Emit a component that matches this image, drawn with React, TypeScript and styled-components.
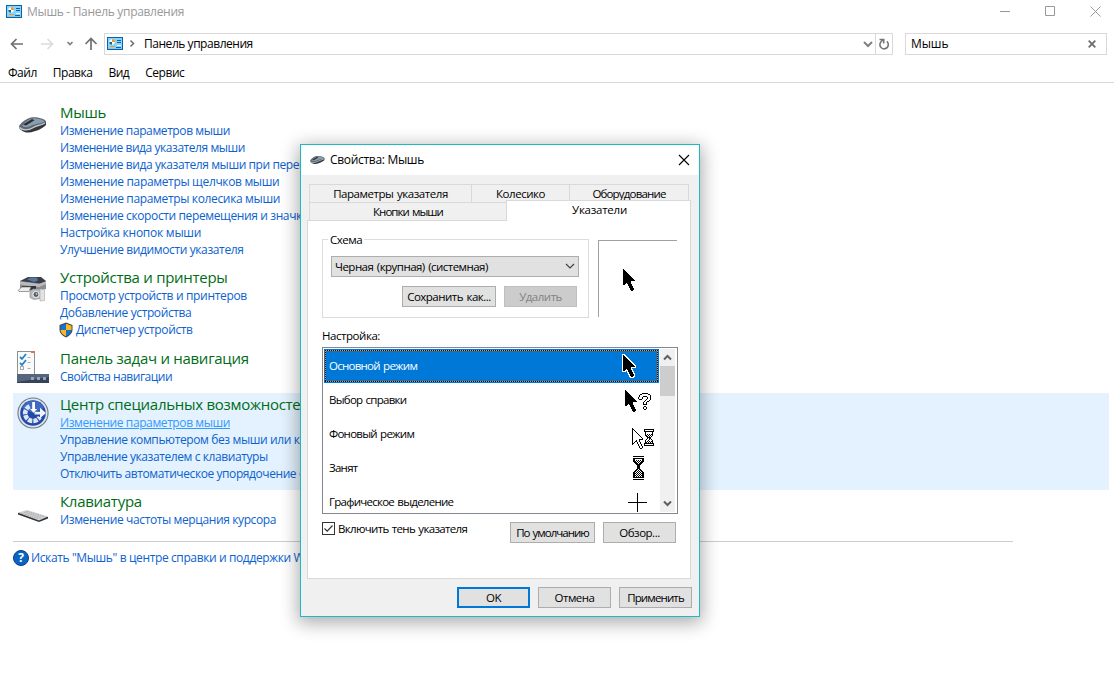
import React from "react";
import styled, { createGlobalStyle, css } from "styled-components";

const GlobalStyle = createGlobalStyle`
  * { box-sizing: border-box; }
  html, body { margin: 0; padding: 0; background: #fff; }
  body { overflow: hidden; font-family: "Open Sans", "Noto Sans", sans-serif; font-size: 12px; color: #000; }
  button { font-family: inherit; }
  svg { display: block; flex: none; }
`;

const Screen = styled.div`
  position: relative;
  width: 1114px;
  height: 680px;
  overflow: hidden;
  background: #fff;
  white-space: nowrap;
`;

/* ---------- explorer window ---------- */

const TitleBar = styled.header`
  display: flex;
  align-items: center;
  height: 23px;
  padding-left: 6px;
  gap: 5px;
  color: #999;
`;

const WindowTitle = styled.span`
  flex: 1;
  letter-spacing: -0.31px;
`;

const WindowControls = styled.div`
  display: flex;
  gap: 34px;
  padding-right: 13px;
`;

const NavBar = styled.nav`
  display: flex;
  align-items: center;
  height: 40px;
  padding: 1px 7px 0 10px;
`;

const NavArrows = styled.div`
  display: flex;
  align-items: center;
  width: 94px;
`;

const Field = styled.div<{ $width: number }>`
  display: flex;
  align-items: center;
  width: ${(p) => p.$width}px;
  height: 22px;
  border: 1px solid #d9d9d9;
`;

const AddressField = styled(Field)`
  padding-left: 2px;
  margin-right: 12px;
`;

const Crumb = styled.span`
  flex: 1;
  padding-left: 7px;
  letter-spacing: -0.46px;
`;

const RefreshButton = styled.div`
  display: flex;
  align-items: center;
  justify-content: center;
  width: 17px;
  height: 20px;
  margin-left: 2px;
  border-left: 1px solid #d9d9d9;
`;

const SearchField = styled(Field)`
  justify-content: space-between;
  padding: 0 10px 0 5px;
  letter-spacing: -0.1px;
`;

const MenuBar = styled.div`
  display: flex;
  gap: 16px;
  height: 20px;
  padding-left: 8px;
  line-height: 20px;
  letter-spacing: -0.48px;
  border-bottom: 1px solid #d9d9d9;
`;

const Results = styled.main`
  padding: 18px 5px 0 13px;
`;

const Group = styled.section<{ $active?: boolean }>`
  display: flex;
  padding: 1px 0 7px;
  background: ${(p) => (p.$active ? "#e3f2fe" : "transparent")};
`;

const GroupIcon = styled.div<{ $top: number }>`
  width: 47px;
  padding: ${(p) => p.$top}px 0 0 4px;
`;

const GroupTitle = styled.h2`
  margin: 0;
  font-size: 15px;
  font-weight: 400;
  line-height: 21px;
  letter-spacing: -0.28px;
  color: #006d16;
`;

const TaskLink = styled.a<{ $hot?: boolean; $shield?: boolean }>`
  display: flex;
  align-items: flex-start;
  height: ${(p) => (p.$shield ? 18 : 17)}px;
  line-height: 15px;
  margin-left: ${(p) => (p.$shield ? -2 : 0)}px;
  gap: 2px;
  color: ${(p) => (p.$hot ? "#3399ff" : "#0b62cf")};
  ${(p) => p.$hot && css`text-decoration: underline;`}
`;

const LinkText = styled.span<{ $track?: number }>`
  letter-spacing: ${(p) => p.$track ?? -0.38}px;
`;

const HelpRow = styled.div`
  display: flex;
  align-items: center;
  gap: 2px;
  width: 1000px;
  margin-top: 5px;
  padding-top: 8px;
  line-height: 16px;
  border-top: 1px solid #ccc;
  color: #0b62cf;
`;

/* ---------- dialog ---------- */

const Dialog = styled.div`
  position: absolute;
  left: 300px;
  top: 144px;
  width: 400px;
  height: 473px;
  background: #f0f0f0;
  border: 1px solid #1cb8c4;
  box-shadow: 0 4px 17px 2px rgba(0, 0, 0, 0.33);
`;

const DialogTitle = styled.div`
  display: flex;
  align-items: center;
  height: 30px;
  padding: 0 9px 0 8px;
  gap: 5px;
  line-height: 16px;
  background: #fff;
`;

const DialogBody = styled.div`
  display: flex;
  flex-direction: column;
  padding: 9px 7px 0 6px;
  font-size: 11.5px;
`;

const TabRow = styled.div`
  display: flex;
  height: 18px;
  padding-left: 2px;
`;

const Tab = styled.div<{ $width: number; $last?: boolean; $active?: boolean; $track?: number }>`
  width: ${(p) => p.$width}px;
  height: 18px;
  line-height: 18px;
  text-align: center;
  letter-spacing: ${(p) => p.$track ?? -0.45}px;
  word-spacing: 1px;
  border: solid #d9d9d9;
  border-width: 1px ${(p) => (p.$last ? 1 : 0)}px 0 1px;
  ${(p) =>
    p.$active &&
    css`
      position: relative;
      z-index: 1;
      height: 21px;
      margin-top: -2px;
      padding-left: 2px;
      background: #fff;
    `}
`;

const TabPanel = styled.div`
  width: 384px;
  height: 359px;
  padding: 18px 12px 0 14px;
  background: #fff;
  border: 1px solid #d9d9d9;
`;

const SchemeRow = styled.div`
  display: flex;
  gap: 9px;
  height: 80px;
  align-items: flex-start;
`;

const SchemeBox = styled.fieldset`
  display: flex;
  flex-direction: column;
  width: 267px;
  height: 79px;
  margin: 0;
  padding: 16px 9px 0 8px;
  border: 1px solid #dcdcdc;
`;

const SchemeLegend = styled.div`
  align-self: flex-start;
  height: 16px;
  margin-top: -24px;
  margin-bottom: 8px;
  margin-left: -3px;
  padding: 0 2px;
  line-height: 15px;
  letter-spacing: -0.5px;
  background: #fff;
`;

const Select = styled.div`
  display: flex;
  align-items: center;
  justify-content: space-between;
  height: 21px;
  padding: 0 3px;
  letter-spacing: -0.53px;
  word-spacing: 1px;
  background: #e1e1e1;
  border: 1px solid #adadad;
`;

const ButtonRow = styled.div<{ $top?: number; $right?: number }>`
  display: flex;
  justify-content: flex-end;
  gap: 8px;
  margin-top: ${(p) => p.$top ?? 0}px;
  margin-right: ${(p) => p.$right ?? 0}px;
`;

const Button = styled.button<{ $width: number; $primary?: boolean; $track?: number }>`
  width: ${(p) => p.$width}px;
  height: 21px;
  padding: 0;
  font-size: 11.5px;
  line-height: 17px;
  letter-spacing: ${(p) => p.$track ?? -0.5}px;
  word-spacing: 1px;
  color: #000;
  background: #e1e1e1;
  border: ${(p) => (p.$primary ? "2px solid #0078d7" : "1px solid #adadad")};
  &:disabled {
    color: #838383;
    background: #ccc;
    border-color: #bfbfbf;
  }
`;

const Preview = styled.div`
  width: 79px;
  height: 77px;
  margin-top: 1px;
  padding: 28px 0 0 24px;
  border: solid #a0a0a0;
  border-width: 1px 0 0 1px;
`;

const Caption = styled.div`
  height: 28px;
  padding-top: 8px;
  line-height: 17px;
  letter-spacing: -0.45px;
`;

const ListBox = styled.div`
  display: flex;
  width: 356px;
  height: 167px;
  padding: 1px;
  border: 1px solid #828790;
`;

const List = styled.div`
  width: 335px;
  height: 163px;
  overflow: hidden;
`;

const ListItem = styled.div<{ $selected?: boolean }>`
  position: relative;
  display: flex;
  align-items: center;
  justify-content: space-between;
  height: 34px;
  padding: 0 2px 0 4px;
  border: 1px solid transparent;
  letter-spacing: -0.74px;
  word-spacing: 1px;
  ${(p) =>
    p.$selected &&
    css`
      color: #fff;
      background: #0078d7;
      border-color: #0078d7;
    `}
`;

const FocusRect = styled.svg`
  position: absolute;
  inset: 0;
`;

const ItemLabel = styled.span`
  padding-bottom: 1px;
`;

const ScrollBar = styled.div`
  display: flex;
  flex-direction: column;
  justify-content: space-between;
  width: 15px;
  height: 163px;
  margin-left: 1px;
  background: #f0f0f0;
`;

const ScrollArrow = styled.div`
  display: flex;
  align-items: center;
  justify-content: center;
  height: 17px;
`;

const ScrollThumb = styled.div`
  height: 30px;
  margin-bottom: auto;
  background: #cdcdcd;
`;

const OptionsRow = styled.div`
  display: flex;
  justify-content: space-between;
  padding: 8px 2px 0 0;
`;

const CheckLabel = styled.div`
  display: flex;
  gap: 3px;
  line-height: 13px;
  letter-spacing: -0.68px;
  word-spacing: 1px;
`;

const CheckBox = styled.span`
  width: 13px;
  height: 13px;
  border: 1px solid #333;
`;

/* ---------- drawings ---------- */

const toPath = (rows: string[], dx = 0, dy = 0) =>
  rows
    .map((row, y) =>
      [...row].map((c, x) => (c === "X" ? `M${x + dx} ${y + dy}h1v1h-1z` : "")).join("")
    )
    .join("");

const ARROW = [
  "X", "XX", "XXX", "XXXX", "XXXXX", "XXXXXX", "XXXXXXX", "XXXXXXXX", "XXXXXXXXX",
  "XXXXXXXXXX", "XXXXXXXXXXX", "XXXXXXXXXXXX", "XXXXXXXX", "XXXXXXXX", "XXX.XXXX",
  "XX...XXXX", ".....XXXX", "......XXXX", "......XXXX", ".......XXXX", ".......XXXX", "........XX",
];

const HOLLOW_ARROW = [
  "X", "XX", "X.X", "X..X", "X...X", "X....X", "X.....X", "X......X", "X.......X",
  "X........X", "X.........X", "X......XXXX", "X...X..X", "X..XX..X", "X.X..X..X", "XX...X..X",
  "X.....X..X", "......X..X", ".......X..X", ".......X..X", "........XX",
];

const QUESTION = [
  "....XXXXXX", "..XX......XX", ".X..........X", ".X...XXXX...X", "X...X....X..X", "X...X....X..X",
  ".XXX....X...X", ".......X...X", "......X..XX", ".....X..X", ".....X..X", ".....XXXX", "",
  "......XX", ".....X..X", ".....X..X", "......XX",
];

const SMALL_GLASS = [
  "XXXXXXXXXX", "X........X", "XXXXXXXXXX", ".X......X.", ".X......X.", ".X.X.X.XX.", ".XX.X.X.X.",
  "..XX.X.X..", "...XXXX...", "...X.XX...", "..X..X.X..", ".X..X...X.", ".X.X.X.XX.", ".XX.X.X.X.",
  "XXXXXXXXXX", "X........X", "XXXXXXXXXX",
];

const BIG_GLASS = [
  "XXXXXXXXXXX", "", "XXXXXXXXXXX", "XX.......XX", "XX.X.X.X.XX", "XXX.X.X.XXX", ".XXX.X.XXX.",
  "..XXX.XXX..", "...XXXXX...", "....XXX....", "....XXX....", "....XXX....", "....XXX....", "...XX.XX...",
  "..XX.X.XX..", ".XX.X.X.XX.", "XX.X.X.X.XX", "XXX.X.X.XXX", "XX.X.X.X.XX", "XXX.X.X.XXX", "XX.X.X.X.XX",
  "XXXXXXXXXXX", "", "XXXXXXXXXXX",
];

const CROSS = [...Array(9).fill(".........X"), "XXXXXXXXXXXXXXXXXXX", ...Array(9).fill(".........X")];

const Sprite = ({ parts, size = 34 }: { parts: { d: string; outline?: boolean }[]; size?: number }) => (
  <svg width={size} height={size} viewBox={`0 0 ${size} ${size}`} shapeRendering="crispEdges">
    {parts.map((p, i) => (
      <g key={i}>
        {p.outline && <path d={p.d} fill="#fff" stroke="#fff" strokeWidth="2" />}
        <path d={p.d} fill="#000" />
      </g>
    ))}
  </svg>
);

const MouseIcon = ({ width, height }: { width: number; height: number }) => (
  <svg width={width} height={height} viewBox="0 0 30 18">
    <path d="M3 12c1 3 5 5 9 4.500 6-.5 14-4 17-7.500V5.500L4 10z" fill="#33363b" />
    <path d="M2 10.500C3 7.500 9 2.500 14 1.500c5-.8 14 1 15 4 0 3-7 3.500-11 5.500S10 15 6.500 14.500 2 13 2 10.500z" fill="#5f6973" />
    <path d="M2.500 11.500c2.500 2.800 8.500 3.300 13 .5 4-2.400 9-2.700 12.500-5" fill="none" stroke="#c3c9d0" strokeWidth="1.300" />
    <path d="M5 9.500C9 5 12 2.800 16 2.500c5-.3 10 1.200 11.500 3C25 7.500 18 7.500 14 9.800 11 11.500 7 11.500 5 9.500z" fill="#8a9cb2" />
    <path d="M6 8.500 15 3l2.500 1.200L9 9.500z" fill="#2b2f35" />
  </svg>
);

const PanelIcon = () => (
  <svg width="16" height="13" viewBox="0 0 16 13">
    <rect x=".5" y=".5" width="15" height="12" fill="#7cc9f5" stroke="#0b62a4" />
    <path d="M1 1h14v10H1z" fill="#86d3fb" />
    <circle cx="5" cy="5" r="2.700" fill="#fff" />
    <path d="M5 2a3 3 0 0 1 3 3H5z" fill="#f59a1b" />
    <path d="M2.300 5A2.700 2.700 0 0 0 5 7.700V5z" fill="#0b62a4" />
    <path d="M10 3.500h4M10 5.500h4" stroke="#0b62a4" />
    <path d="M10 8.500h4" stroke="#fff" />
    <path d="M3 9.500h5" stroke="#f59a1b" />
    <path d="M9 10.500h5" stroke="#0b62a4" />
  </svg>
);

const PrinterIcon = () => (
  <svg width="30" height="26" viewBox="0 0 30 26">
    <path d="M3 5v7l14 3 12-2V5z" fill="#8b8e92" />
    <path d="M3 5 11 1l13 0 5 4-6 2.500z" fill="#3a3d43" />
    <path d="m10 3.500 3-2h7l1 3-4 1.500z" fill="#5578a0" />
    <path d="M3 5.500 22 8l7-2.500V8l-7 3L3 8.500z" fill="#b9bbbe" />
    <path d="M5 10h14v4H5z" fill="#303337" />
    <path d="m1 14.500 4-3.500h9l-2 4.500H2z" fill="#eceded" stroke="#777" strokeWidth=".7" />
    <path d="m13 15 3-2h10v9l-9 1.500-4-2z" fill="#b6b9bc" stroke="#808387" strokeWidth=".6" />
    <path d="m23 13 4.500.5v11L23 25z" fill="#e1e3e4" stroke="#999" strokeWidth=".5" />
    <circle cx="19" cy="18.500" r="3.600" fill="#e3e5e7" />
    <circle cx="19" cy="18.500" r="2.400" fill="#53585d" />
    <circle cx="19.500" cy="18" r=".9" fill="#c7ccd1" />
  </svg>
);

const TaskbarIcon = () => (
  <svg width="32" height="32" viewBox="0 0 32 32">
    <rect x=".5" y=".5" width="17" height="24" fill="#fafafa" stroke="#8d9094" />
    <path d="M14 0h3v2h-3z" fill="#e0703e" />
    <path d="m3 6 2 2 4-5M3 12l2 2 4-5" fill="none" stroke="#2382c4" strokeWidth="1.800" />
    <path d="M10.500 6.500h3M10.500 11.500h3M10.500 17.500h3" stroke="#b0b0b0" />
    <rect x="3.500" y="15.500" width="3" height="3" fill="none" stroke="#aaa" />
    <path d="M0 23h32v9H0z" fill="#34435a" />
    <path d="M0 23h32v3L0 31z" fill="#56657b" />
    <path d="M14 26h3v3h-3zM20 26h3v3h-3zM26 26h3v3h-3z" fill="#98a4b5" />
  </svg>
);

const AccessIcon = () => (
  <svg width="32" height="32" viewBox="0 0 32 32">
    <circle cx="16" cy="16" r="15.600" fill="#6f7885" />
    <circle cx="16" cy="16" r="14.500" fill="#dfe5ed" />
    <circle cx="16" cy="16" r="12.800" fill="#2149a8" />
    <path d="M5 11a12 12 0 0 1 22 0L16 16z" fill="#3f69c2" />
    <path
      d="M12.600 9.200A7.800 7.800 0 1 0 22.800 20"
      fill="none"
      stroke="#dfe6f3"
      strokeWidth="4.600"
      strokeDasharray="4.300 1"
    />
    <path d="M15.200 5h2.800v7h2.200l-3.600 3.800-3.600-3.800h2.200z" fill="#fff" />
    <path d="M17.500 14.800h5.500v-4l6 5.200-6 5.200v-3.600h-5.500z" fill="#f1f4fa" />
  </svg>
);

const KeyboardIcon = () => (
  <svg width="32" height="14" viewBox="0 0 32 14">
    <path d="m1 4 9-2 21 6v1.500L22 13 1 5.500z" fill="#2f3134" />
    <path d="m1 3.800 9-2.800L31 7.500l-9 4z" fill="#d0d1d2" />
    <path d="m4 4 17 5.800M7 3l17 5.800M9.500 2.200l18 5.500" stroke="#a2a4a6" strokeWidth=".9" strokeDasharray="1.500 .8" />
  </svg>
);

const ShieldIcon = () => (
  <svg width="16" height="16" viewBox="0 0 16 16">
    <path d="M8 .5 14.500 3v4.500c0 3.500-2.500 6-6.500 8-4-2-6.500-4.500-6.500-8V3z" fill="#404852" />
    <path d="M8 1.700V8H2.500V3.700z" fill="#1973c8" />
    <path d="M8 1.700V8h5.500V3.700z" fill="#fcb81f" />
    <path d="M8 8v6.300C4.500 12.500 2.700 10.500 2.500 8z" fill="#fcb81f" />
    <path d="M8 8v6.300c3.500-1.800 5.300-3.800 5.500-6.300z" fill="#1973c8" />
  </svg>
);

const HelpBadge = styled.span`
  display: flex;
  align-items: center;
  justify-content: center;
  width: 16px;
  height: 16px;
  border-radius: 50%;
  border: 1px solid #053e80;
  background: #0a64c4;
  color: #fff;
  font-size: 12px;
  font-weight: 700;
  line-height: 14px;
`;

/* ---------- content ---------- */

type Task = { text: string; track?: number; hot?: boolean; shield?: boolean };
type GroupData = { title: string; top: number; icon: React.ReactNode; active?: boolean; tasks: Task[] };

const groups: GroupData[] = [
  {
    title: "Мышь",
    top: 14,
    icon: <MouseIcon width={30} height={18} />,
    tasks: [
      { text: "Изменение параметров мыши", track: -0.4 },
      { text: "Изменение вида указателя мыши", track: -0.44 },
      { text: "Изменение вида указателя мыши при перемещении", track: -0.41 },
      { text: "Изменение параметры щелчков мыши", track: -0.34 },
      { text: "Изменение параметры колесика мыши", track: -0.35 },
      { text: "Изменение скорости перемещения и значков" },
      { text: "Настройка кнопок мыши", track: -0.25 },
      { text: "Улучшение видимости указателя" },
    ],
  },
  {
    title: "Устройства и принтеры",
    top: 9,
    icon: <PrinterIcon />,
    tasks: [
      { text: "Просмотр устройств и принтеров", track: -0.33 },
      { text: "Добавление устройства" },
      { text: "Диспетчер устройств", shield: true },
    ],
  },
  {
    title: "Панель задач и навигация",
    top: 3,
    icon: <TaskbarIcon />,
    tasks: [{ text: "Свойства навигации", track: -0.48 }],
  },
  {
    title: "Центр специальных возможностей",
    top: 3,
    icon: <AccessIcon />,
    active: true,
    tasks: [
      { text: "Изменение параметров мыши", track: -0.4, hot: true },
      { text: "Управление компьютером без мыши или клавиатуры" },
      { text: "Управление указателем с клавиатуры", track: -0.41 },
      { text: "Отключить автоматическое упорядочение окон", track: -0.42 },
    ],
  },
  {
    title: "Клавиатура",
    top: 18,
    icon: <KeyboardIcon />,
    tasks: [{ text: "Изменение частоты мерцания курсора" }],
  },
];

const cursors = [
  { label: "Основной режим", parts: [{ d: toPath(ARROW, 1, 6), outline: true }] },
  { label: "Выбор справки", parts: [{ d: toPath(ARROW, 3, 7) }, { d: toPath(QUESTION, 16, 10) }] },
  { label: "Фоновый режим", parts: [{ d: toPath(HOLLOW_ARROW, 10, 11) }, { d: toPath(SMALL_GLASS, 22, 12) }] },
  { label: "Занят", parts: [{ d: toPath(BIG_GLASS, 11, 5) }] },
  { label: "Графическое выделение", parts: [{ d: toPath(CROSS, 6, 8) }] },
];

const App = () => (
  <Screen>
    <GlobalStyle />
    <TitleBar>
      <PanelIcon />
      <WindowTitle>Мышь - Панель управления</WindowTitle>
      <WindowControls>
        <svg width="11" height="11" viewBox="0 0 11 11" stroke="#999"><path d="M0 5.500h10" /></svg>
        <svg width="11" height="11" viewBox="0 0 11 11" stroke="#999" fill="none"><path d="M.5.500h9v9h-9z" /></svg>
        <svg width="11" height="11" viewBox="0 0 11 11" stroke="#999"><path d="m.5.500 10 10m0-10-10 10" /></svg>
      </WindowControls>
    </TitleBar>
    <NavBar>
      <NavArrows>
        <svg width="90" height="14" viewBox="0 0 90 14" fill="none" strokeWidth="1.700">
          <path d="M13 7H1.500M6.500 2l-5 5 5 5" stroke="#707070" />
          <path d="M31 7h11.500M37.500 2l5 5-5 5" stroke="#dcdcdc" />
          <path d="m57.500 5 2.500 2.500L62.500 5" stroke="#808080" />
          <path d="M81 13V2M75.500 7 81 1.500 86.500 7" stroke="#707070" />
        </svg>
      </NavArrows>
      <AddressField $width={789}>
        <PanelIcon />
        <svg width="14" height="9" viewBox="0 0 14 9" fill="none" stroke="#707070" strokeWidth="1.500"><path d="m7.500 1.500 3 3-3 3" /></svg>
        <Crumb>Панель управления</Crumb>
        <svg width="10" height="8" viewBox="0 0 10 8" fill="none" stroke="#808080" strokeWidth="2"><path d="m1 2 4 4 4-4" /></svg>
        <RefreshButton>
          <svg width="12" height="12" viewBox="0 0 12 12" fill="none" stroke="#777" strokeWidth="1.600">
            <path d="M8.800 3.400A4.200 4.200 0 1 1 3 3.800L5 1.500M1.500 1.500h4.200v4" />
          </svg>
        </RefreshButton>
      </AddressField>
      <SearchField $width={202}>
        <span>Мышь</span>
        <svg width="8" height="8" viewBox="0 0 8 8" stroke="#707070" strokeWidth="1.900"><path d="m.7.700 6.600 6.600m0-6.600L.7 7.300" /></svg>
      </SearchField>
    </NavBar>
    <MenuBar>
      <span>Файл</span>
      <span>Правка</span>
      <span>Вид</span>
      <span>Сервис</span>
    </MenuBar>
    <Results>
      {groups.map((g) => (
        <Group key={g.title} $active={g.active}>
          <GroupIcon $top={g.top}>{g.icon}</GroupIcon>
          <div>
            <GroupTitle>{g.title}</GroupTitle>
            {g.tasks.map((t) => (
              <TaskLink key={t.text} $hot={t.hot} $shield={t.shield}>
                {t.shield && <ShieldIcon />}
                <LinkText $track={t.track}>{t.text}</LinkText>
              </TaskLink>
            ))}
          </div>
        </Group>
      ))}
      <HelpRow>
        <HelpBadge>?</HelpBadge>
        <LinkText>Искать "Мышь" в центре справки и поддержки Windows</LinkText>
      </HelpRow>
    </Results>

    <Dialog>
      <DialogTitle>
        <MouseIcon width={16} height={10} />
        <WindowTitle>Свойства: Мышь</WindowTitle>
        <svg width="12" height="12" viewBox="0 0 12 12" stroke="#000" strokeWidth="1.100"><path d="m1 1 10 10m0-10L1 11" /></svg>
      </DialogTitle>
      <DialogBody>
        <TabRow>
          <Tab $width={162}>Параметры указателя</Tab>
          <Tab $width={98}>Колесико</Tab>
          <Tab $width={120} $last $track={-0.82}>Оборудование</Tab>
        </TabRow>
        <TabRow>
          <Tab $width={197} $track={-0.95}>Кнопки мыши</Tab>
          <Tab $width={185} $track={-0.25} $last $active>Указатели</Tab>
        </TabRow>
        <TabPanel>
          <SchemeRow>
            <SchemeBox>
              <SchemeLegend>Схема</SchemeLegend>
              <Select>
                <span>Черная (крупная) (системная)</span>
                <svg width="10" height="7" viewBox="0 0 10 7" fill="none" stroke="#444" strokeWidth="1.200"><path d="m1 1 4 4 4-4" /></svg>
              </Select>
              <ButtonRow $top={9} $right={2}>
                <Button $width={94}>Сохранить как...</Button>
                <Button $width={73} disabled>Удалить</Button>
              </ButtonRow>
            </SchemeBox>
            <Preview>
              <Sprite size={24} parts={[{ d: toPath(ARROW) }]} />
            </Preview>
          </SchemeRow>
          <Caption>Настройка:</Caption>
          <ListBox>
            <List>
              {cursors.map((c, i) => (
                <ListItem key={c.label} $selected={i === 0}>
                  <ItemLabel>{c.label}</ItemLabel>
                  <Sprite parts={c.parts} />
                  {i === 0 && (
                    <FocusRect width="333" height="32" viewBox="0 0 333 32" fill="none" shapeRendering="crispEdges">
                      <path d="M0 .5h333M0 31.500h333M.5 0v32M332.500 0v32" stroke="#ff8728" />
                      <path d="M0 .5h333M0 31.500h333M.5 0v32M332.500 0v32" stroke="#111" strokeDasharray="1 1" />
                    </FocusRect>
                  )}
                </ListItem>
              ))}
            </List>
            <ScrollBar>
              <ScrollArrow>
                <svg width="9" height="7" viewBox="0 0 9 7" fill="none" stroke="#606060" strokeWidth="2"><path d="m1 5.500 3.500-3.500L8 5.500" /></svg>
              </ScrollArrow>
              <ScrollThumb />
              <ScrollArrow>
                <svg width="9" height="7" viewBox="0 0 9 7" fill="none" stroke="#606060" strokeWidth="2"><path d="m1 1.500 3.500 3.500L8 1.500" /></svg>
              </ScrollArrow>
            </ScrollBar>
          </ListBox>
          <OptionsRow>
            <CheckLabel>
              <CheckBox>
                <svg width="11" height="11" viewBox="0 0 11 11" fill="none" stroke="#333" strokeWidth="1.200"><path d="m1.500 5.500 2.700 2.700L9.500 2.500" /></svg>
              </CheckBox>
              Включить тень указателя
            </CheckLabel>
            <ButtonRow>
              <Button $width={85} $track={-0.98}>По умолчанию</Button>
              <Button $width={73}>Обзор...</Button>
            </ButtonRow>
          </OptionsRow>
        </TabPanel>
        <ButtonRow $top={8}>
          <Button $width={73} $primary>OK</Button>
          <Button $width={73}>Отмена</Button>
          <Button $width={73} $track={-0.85}>Применить</Button>
        </ButtonRow>
      </DialogBody>
    </Dialog>
  </Screen>
);

export default App;
